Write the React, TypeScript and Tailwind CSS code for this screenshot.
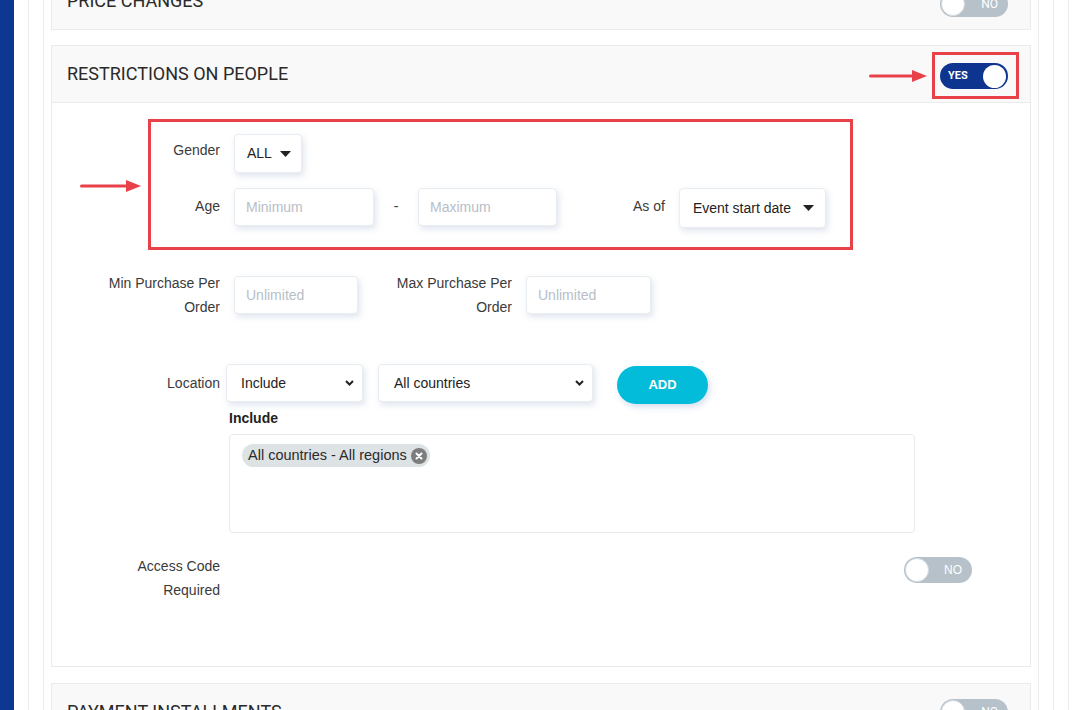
import React from "react";

const RED = "#e8414a";

function Arrow({ w }: { w: number }) {
  return (
    <svg width={w} height="14" viewBox={`0 0 ${w} 14`} className="block shrink-0">
      <path d={`M1.5 7H${w - 13}`} stroke={RED} strokeWidth="3" strokeLinecap="round" />
      <path d={`M${w - 15} 1L${w} 7L${w - 15} 13Z`} fill={RED} />
    </svg>
  );
}

function Caret() {
  return (
    <svg width="11" height="6" viewBox="0 0 11 6" className="block shrink-0">
      <path d="M0 0H11L5.5 6Z" fill="#222" />
    </svg>
  );
}

function Chevron() {
  return (
    <svg width="9" height="6" viewBox="0 0 9 6" className="block shrink-0">
      <path d="M1 1L4.5 4.5L8 1" stroke="#222" strokeWidth="2" fill="none" />
    </svg>
  );
}

function Toggle({ on }: { on: boolean }) {
  if (on) {
    return (
      <div className="flex h-[26px] w-[68px] items-center justify-between rounded-full bg-[#0d3590] pl-[8px] pr-[2px]">
        <span className="text-[11px] font-bold text-white">YES</span>
        <span className="h-[23px] w-[23px] rounded-full bg-white" />
      </div>
    );
  }
  return (
    <div className="flex h-[26px] w-[68px] items-center justify-between rounded-full bg-[#b6c1ca] pl-[1px] pr-[10px]">
      <span className="h-[24px] w-[24px] rounded-full border border-[#d5dbe0] bg-white" />
      <span className="text-[12px] text-white">NO</span>
    </div>
  );
}

const field =
  "rounded-[4px] border border-[#e9ecf0] bg-white shadow-[2px_3px_6px_rgba(150,165,195,0.3)]";

function Input({ w, h = 38, placeholder }: { w: number; h?: number; placeholder: string }) {
  return (
    <div
      className={`${field} flex items-center pl-[11px] text-[14px] text-[#b7bec7]`}
      style={{ width: w, height: h }}
    >
      {placeholder}
    </div>
  );
}

function CardHeader({
  title,
  right,
  children,
}: {
  title: string;
  right: string;
  children: React.ReactNode;
}) {
  return (
    <div
      className={`flex h-[56px] items-center justify-between bg-[#f9f9f9] pl-[15px] ${right} font-['Roboto',sans-serif] text-[18px] text-[#2a2a2a]`}
    >
      <span className="-mt-[2px]">{title}</span>
      {children}
    </div>
  );
}

export default function App() {
  return (
    <div className="flex h-[710px] w-[1083px] overflow-hidden bg-white font-['Liberation_Sans',Arial,sans-serif] text-[14px] text-[#3a3a3a]">
      {/* side rail */}
      <div className="w-[14px] shrink-0 bg-[#0c3792]" />

      <div className="flex-1 px-[14px]">
        <div className="h-full border-x border-[#ececec] px-[14px]">
          <div className="flex h-full border-x border-[#ececec]">
            <div className="flex-1 pl-[7px]">
              <div className="-mt-[28px] flex flex-col">
                {/* Price changes */}
                <div className="mb-[15px] border border-[#ebebeb]">
                  <CardHeader title="PRICE CHANGES" right="pr-[22px]">
                    <div className="mt-[6px]">
                      <Toggle on={false} />
                    </div>
                  </CardHeader>
                </div>

                {/* Restrictions on people */}
                <div className="border border-[#ebebeb]">
                  <div className="border-b border-[#ebebeb]">
                    <CardHeader title="RESTRICTIONS ON PEOPLE" right="pr-[11px]">
                      <div className="mt-[3px] flex items-center gap-[5px]">
                        <Arrow w={58} />
                        <div className="border-[3px] border-[#e8414a] pb-[7px] pl-[5px] pr-[8px] pt-[8px]">
                          <Toggle on />
                        </div>
                      </div>
                    </CardHeader>
                  </div>

                  <div className="pb-[64px] pt-[16px]">
                    {/* gender / age group */}
                    <div className="flex items-start">
                      <div className="ml-[28px] mt-[60px]">
                        <Arrow w={61} />
                      </div>
                      <div className="ml-[7px] w-[705px] border-[3px] border-[#e8414a] pb-[19px] pt-[12px]">
                        <div className="flex items-start gap-[14px]">
                          <div className="w-[69px] pt-[6px] text-right leading-[20px]">Gender</div>
                          <div className={`${field} flex h-[39px] items-center gap-[8px] pl-[12px] pr-[10px] text-[#222]`}>
                            <span>ALL</span>
                            <Caret />
                          </div>
                        </div>
                        <div className="mt-[15px] flex items-start">
                          <div className="w-[69px] pt-[8px] text-right leading-[20px]">Age</div>
                          <div className="ml-[14px]">
                            <Input w={140} placeholder="Minimum" />
                          </div>
                          <div className="w-[44px] pt-[8px] text-center leading-[20px]">-</div>
                          <Input w={139} placeholder="Maximum" />
                          <div className="ml-[76px] pt-[8px] leading-[20px]">As of</div>
                          <div className={`${field} ml-[14px] flex h-[40px] w-[147px] items-center justify-between pl-[13px] pr-[11px] text-[#222]`}>
                            <span>Event start date</span>
                            <Caret />
                          </div>
                        </div>
                      </div>
                    </div>

                    {/* purchase limits */}
                    <div className="mt-[21px] flex items-start">
                      <div className="w-[168px] text-right leading-[24px]">
                        Min Purchase Per
                        <br />
                        Order
                      </div>
                      <div className="ml-[14px] mt-[5px]">
                        <Input w={124} placeholder="Unlimited" />
                      </div>
                      <div className="ml-[30px] w-[124px] whitespace-nowrap text-right leading-[24px]">
                        Max Purchase Per
                        <br />
                        Order
                      </div>
                      <div className="ml-[14px] mt-[5px]">
                        <Input w={125} placeholder="Unlimited" />
                      </div>
                    </div>

                    {/* location */}
                    <div className="mt-[45px] flex items-start">
                      <div className="flex h-[38px] w-[168px] items-center justify-end">Location</div>
                      <div className={`${field} ml-[6px] flex h-[38px] w-[137px] items-center justify-between pl-[14px] pr-[8px] text-[#222]`}>
                        <span>Include</span>
                        <Chevron />
                      </div>
                      <div className={`${field} ml-[15px] flex h-[38px] w-[215px] items-center justify-between pl-[15px] pr-[8px] text-[#222]`}>
                        <span>All countries</span>
                        <Chevron />
                      </div>
                      <div className="ml-[24px] mt-[2px] flex h-[38px] w-[91px] items-center justify-center rounded-full bg-[#02bcd9] text-[13px] font-bold text-white shadow-[2px_3px_6px_rgba(120,150,200,0.3)]">
                        ADD
                      </div>
                    </div>

                    <div className="ml-[177px] mt-[4px] font-bold leading-[20px] text-[#222]">Include</div>
                    <div className="ml-[177px] mt-[6px] h-[99px] w-[686px] rounded-[4px] border border-[#e6e9ed] pl-[12px] pt-[9px]">
                      <div className="inline-flex h-[23px] items-center gap-[4px] rounded-full bg-[#dde2e4] pl-[6px] pr-[3px] text-[14.5px] text-[#2b2b2b]">
                        <span>All countries - All regions</span>
                        <span className="flex h-[16px] w-[16px] items-center justify-center rounded-full bg-[#7d7d7d]">
                          <svg width="8" height="8" viewBox="0 0 8 8">
                            <path d="M1.5 1.5L6.5 6.5M6.5 1.5L1.5 6.5" stroke="#fff" strokeWidth="2" strokeLinecap="round" />
                          </svg>
                        </span>
                      </div>
                    </div>

                    {/* access code */}
                    <div className="mt-[21px] flex items-start pr-[58px]">
                      <div className="w-[168px] text-right leading-[24px]">
                        Access Code
                        <br />
                        Required
                      </div>
                      <div className="ml-auto mt-[3px]">
                        <Toggle on={false} />
                      </div>
                    </div>
                  </div>
                </div>

                {/* Payment installments */}
                <div className="mt-[16px] border border-[#ebebeb]">
                  <CardHeader title="PAYMENT INSTALLMENTS" right="pr-[22px]">
                    <Toggle on={false} />
                  </CardHeader>
                </div>
              </div>
            </div>
            <div className="ml-[7px] w-[15px] border-l border-[#ececec]" />
          </div>
        </div>
      </div>
    </div>
  );
}
